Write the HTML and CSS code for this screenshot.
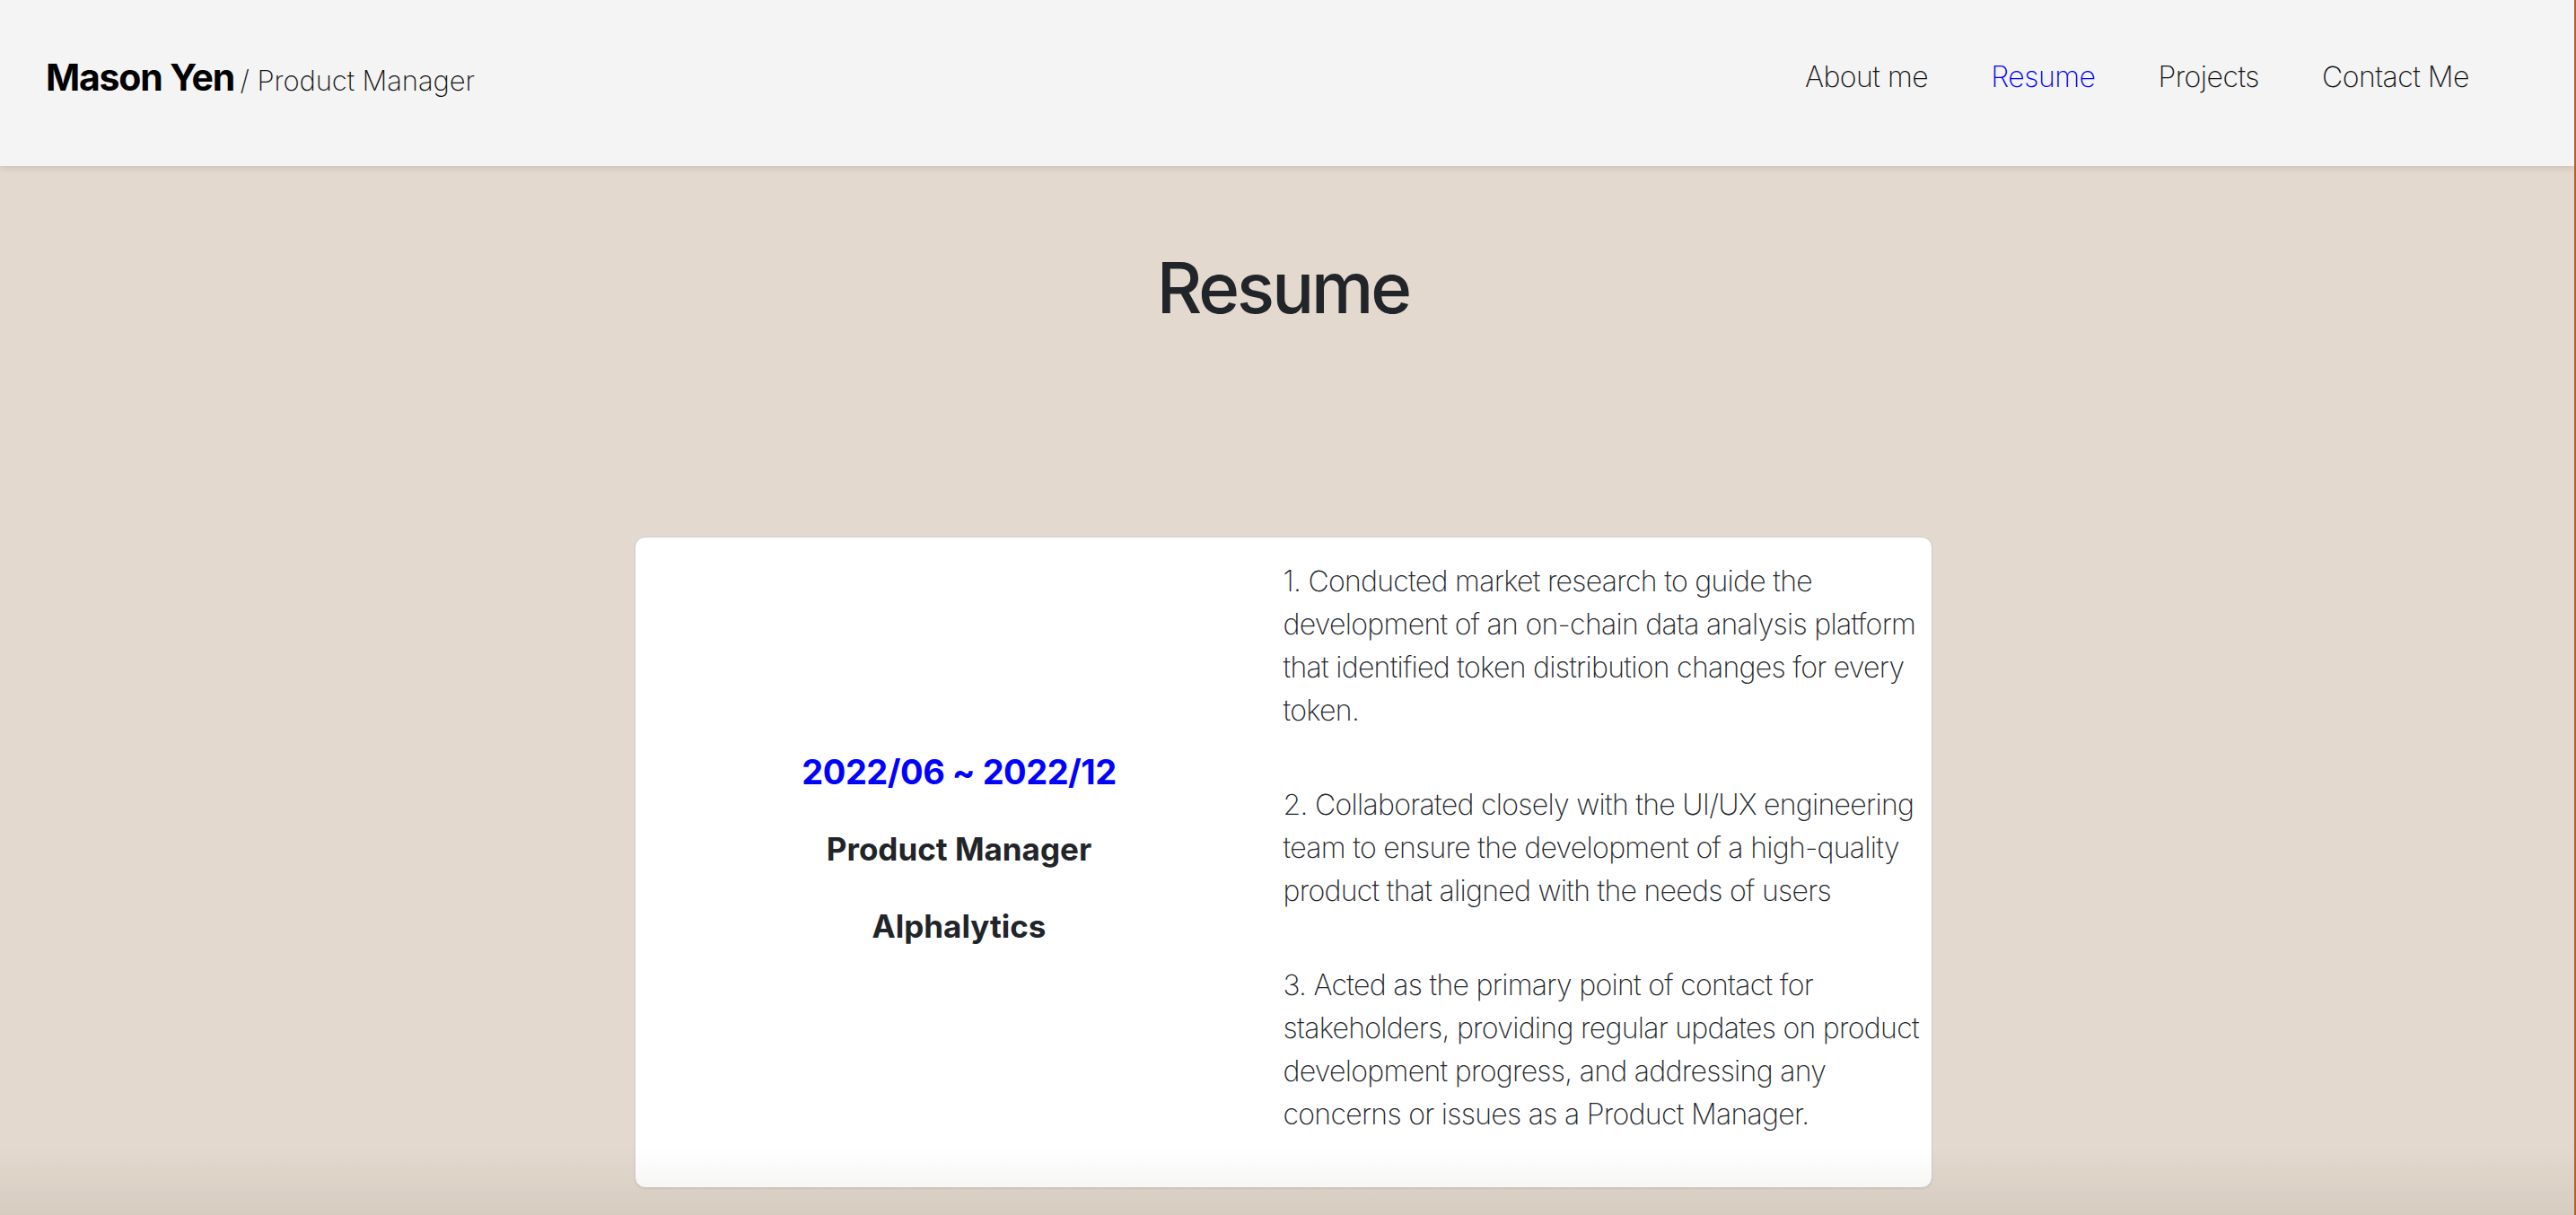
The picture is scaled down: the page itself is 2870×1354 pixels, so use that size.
FILE: index.html
```html
<!DOCTYPE html>
<html lang="en">
<head>
<meta charset="utf-8">
<title>Mason Yen / Resume</title>
<link rel="stylesheet" href="styles.css">
</head>
<body>
  <header class="site-header">
    <div class="brand"><span class="brand-name">Mason Yen</span> <span class="brand-role">/ Product Manager</span></div>
    <nav class="nav">
      <a class="nav-link" href="#about">About me</a>
      <a class="nav-link is-active" href="#resume">Resume</a>
      <a class="nav-link" href="#projects">Projects</a>
      <a class="nav-link" href="#contact">Contact Me</a>
    </nav>
  </header>

  <main class="resume" id="resume">
    <h1 class="resume-title">Resume</h1>

    <section class="job-card">
      <div class="job-meta">
        <p class="job-date">2022/06 ~ 2022/12</p>
        <p class="job-role">Product Manager</p>
        <p class="job-company">Alphalytics</p>
      </div>
      <div class="job-duties">
        <p>1. Conducted market research to guide the development of an on-chain data analysis platform that identified token distribution changes for every token.</p>
        <p>2. Collaborated closely with the UI/UX engineering team to ensure the development of a high-quality product that aligned with the needs of users</p>
        <p>3. Acted as the primary point of contact for stakeholders, providing regular updates on product development progress, and addressing any concerns or issues as a Product Manager.</p>
      </div>
    </section>
  </main>

  <div class="bottom-shade"></div>
</body>
</html>
```

FILE: styles.css
```css
html {
  background: #b5602c;
}

body {
  margin: 0 2px 0 0;
  min-height: 100vh;
  background: #e3d9ce;
  font-family: Inter, "Noto Sans", "Liberation Sans", sans-serif;
  color: #212529;
}

/* ---------- header ---------- */
.site-header {
  position: relative;
  z-index: 1;
  box-sizing: border-box;
  height: 185px;
  padding: 0 117px 12px 51px;
  display: flex;
  align-items: center;
  justify-content: space-between;
  background: #f4f4f4;
  box-shadow: 0 2px 7px rgba(60, 40, 20, 0.14);
}

.brand {
  line-height: 1.2;
  white-space: nowrap;
}

.brand-name {
  font-size: 41px;
  font-weight: 700;
  color: #000;
  letter-spacing: -1.2px;
  margin-right: 2px;
}

.brand-role {
  font-size: 31px;
  font-weight: 200;
  color: #111;
  letter-spacing: -0.1px;
}

.nav {
  display: flex;
  gap: 70px;
}

.nav-link {
  font-size: 32px;
  line-height: 1.2;
  font-weight: 200;
  color: #111;
  letter-spacing: -0.5px;
  text-decoration: none;
}

.nav-link.is-active {
  color: #0000ff;
}

/* ---------- resume ---------- */
.resume {
  padding: 89px 9px 0 0;
}

.resume-title {
  margin: 0 0 230px;
  text-align: center;
  font-size: 78px;
  line-height: 1.2;
  font-weight: 500;
  letter-spacing: -3px;
  color: #212529;
}

.job-card {
  width: 1446px;
  box-sizing: border-box;
  margin: 0 auto;
  display: grid;
  grid-template-columns: 1fr 1fr;
  background: #fff;
  border: 1px solid #cfcfcf;
  border-radius: 12px;
  box-shadow: 0 1px 2px rgba(0, 0, 0, 0.08);
}

.job-meta {
  display: flex;
  flex-direction: column;
  justify-content: center;
  align-items: center;
  padding-bottom: 29px;
  text-align: center;
}

.job-meta p {
  margin: 0;
  line-height: 86px;
  font-weight: 700;
}

.job-date {
  font-size: 38px;
  letter-spacing: -0.5px;
  color: #0000ff;
}

.job-role,
.job-company {
  font-size: 35px;
  color: #212529;
}

.job-duties {
  padding: 25px 0 0 0;
}

.job-duties p {
  margin: 0 0 57px;
  font-size: 32px;
  line-height: 48px;
  font-weight: 200;
  letter-spacing: -0.7px;
  color: #212529;
}

/* soft shade along the bottom of the window */
.bottom-shade {
  position: fixed;
  left: 0;
  right: 2px;
  bottom: 0;
  height: 75px;
  pointer-events: none;
  background: linear-gradient(to bottom, rgba(60, 40, 20, 0), rgba(60, 40, 20, 0.07));
}
```
